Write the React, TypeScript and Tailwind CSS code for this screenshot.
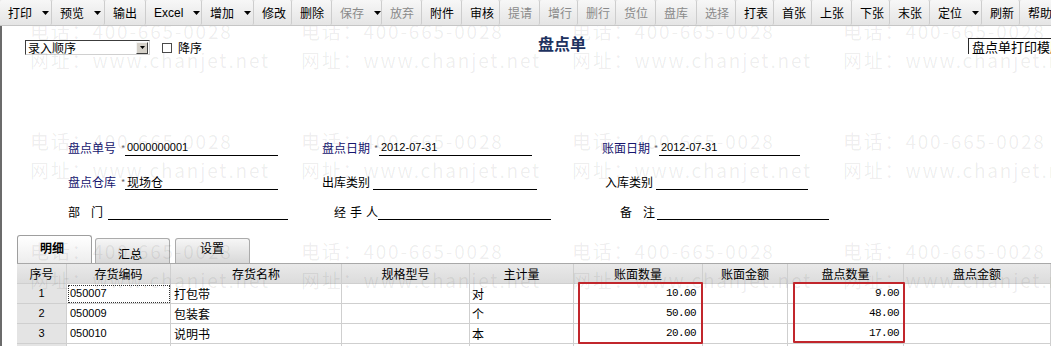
import React from "react";

type Tool = { label: string; w: string; arrow?: boolean; off?: boolean; latin?: boolean };

const tools: Tool[] = [
  { label: "打印", w: "w-[52px]", arrow: true },
  { label: "预览", w: "w-[53px]", arrow: true },
  { label: "输出", w: "w-[41px]" },
  { label: "Excel", w: "w-[56px]", arrow: true, latin: true },
  { label: "增加", w: "w-[52px]", arrow: true },
  { label: "修改", w: "w-[38px]" },
  { label: "删除", w: "w-[40px]" },
  { label: "保存", w: "w-[50px]", arrow: true, off: true },
  { label: "放弃", w: "w-[40px]", off: true },
  { label: "附件", w: "w-[40px]" },
  { label: "审核", w: "w-[38px]" },
  { label: "提请", w: "w-[40px]", off: true },
  { label: "增行", w: "w-[38px]", off: true },
  { label: "删行", w: "w-[38px]", off: true },
  { label: "货位", w: "w-[40px]", off: true },
  { label: "盘库", w: "w-[41px]", off: true },
  { label: "选择", w: "w-[39px]", off: true },
  { label: "打表", w: "w-[38px]" },
  { label: "首张", w: "w-[38px]" },
  { label: "上张", w: "w-[40px]" },
  { label: "下张", w: "w-[38px]" },
  { label: "末张", w: "w-[40px]" },
  { label: "定位", w: "w-[52px]", arrow: true },
  { label: "刷新", w: "w-[38px]" },
  { label: "帮助", w: "w-[40px]" },
];

function Arrow() {
  return (
    <svg width="7" height="4" viewBox="0 0 7 4" className="ml-[10px] shrink-0">
      <polygon points="0,0 7,0 3.5,4" fill="#000" />
    </svg>
  );
}

const cols = [
  "序号",
  "存货编码",
  "存货名称",
  "规格型号",
  "主计量",
  "账面数量",
  "账面金额",
  "盘点数量",
  "盘点金额",
];

const rows = [
  { n: "1", code: "050007", name: "打包带", unit: "对", book: "10.00", count: "9.00" },
  { n: "2", code: "050009", name: "包装套", unit: "个", book: "50.00", count: "48.00" },
  { n: "3", code: "050010", name: "说明书", unit: "本", book: "20.00", count: "17.00" },
];

const cell = "h-[20px] border-r border-b border-[#cfcfcf] leading-[19px] whitespace-nowrap overflow-hidden";
const latin = "font-['Liberation_Sans','Noto_Sans_CJK_SC',sans-serif]";
const mono = "font-['Liberation_Mono',monospace] text-[11px] tracking-[-0.6px]";

function Watermark() {
  const items = Array.from({ length: 12 });
  return (
    <div className="pointer-events-none absolute left-[28px] top-[-10px] z-20 grid grid-cols-[repeat(4,271px)] auto-rows-[110px] text-[19px] tracking-[1.8px] text-black/[0.07] font-['Noto_Sans_CJK_SC',sans-serif]">
      {items.map((_, i) => (
        <div key={i} className="flex flex-col whitespace-nowrap">
          <span className="h-[29px] leading-[29px]">电话：400-665-0028</span>
          <span className="h-[29px] leading-[29px]">网址：www.chanjet.net</span>
        </div>
      ))}
    </div>
  );
}

export default function App() {
  return (
    <div className="w-[1051px] h-[346px] overflow-hidden bg-white text-[12px] text-black font-['Noto_Sans_CJK_SC',sans-serif]">
      {/* toolbar */}
      <div className="relative z-30 flex h-[26px] border-b border-[#c6c6c6] bg-[#e4e4e4] overflow-hidden">
        {tools.map((t) => (
          <div
            key={t.label}
            className={`${t.w} shrink-0 flex items-center pl-[8px] pt-[1px] h-[25px] border-r border-[#cdcdcd] rounded-[2px] bg-linear-to-b from-[#f7f7f7] to-[#e5e5e5] leading-[14px] ${t.off ? "text-[#8a8a8a]" : "text-black"} ${t.latin ? latin : ""}`}
          >
            <span className="whitespace-nowrap">{t.label}</span>
            {t.arrow && <Arrow />}
          </div>
        ))}
      </div>

      {/* main */}
      <div className="relative h-[320px] border-l-2 border-[#6b6b6b] overflow-hidden">
        <Watermark />

        {/* top row */}
        <div className="flex h-[40px] items-start">
          <div className="w-[536px] shrink-0 flex items-center pl-[23px] pt-[14px]">
            <div className="flex h-[15px] w-[125px] items-center justify-between border border-t-[#3c3c3c] border-l-[#3c3c3c] border-r-[#d0d0d0] border-b-[#d0d0d0] bg-white">
              <span className="pl-[2px] leading-[13px] text-[12px]">录入顺序</span>
              <span className="flex h-[12px] w-[12px] items-center justify-center border border-t-[#f4f4f4] border-l-[#f4f4f4] border-r-[#404040] border-b-[#404040] bg-[#d4d0c8] mr-[1px]">
                <svg width="5" height="3" viewBox="0 0 5 3">
                  <polygon points="0,0 5,0 2.5,3" fill="#000" />
                </svg>
              </span>
            </div>
            <span className="ml-[12px] h-[10px] w-[10px] border border-[#4a4a4a] bg-white" />
            <span className="ml-[6px] leading-[14px]">降序</span>
          </div>
          <div className="mt-[9px] w-[60px] shrink-0 text-[16px] leading-[16px] font-bold text-[#1d3260]">盘点单</div>
          <div className="flex-1" />
          <div className="mt-[12px] h-[16px] w-[83px] shrink-0 overflow-hidden whitespace-nowrap border-l border-t border-[#2a2a2a] pl-[3px] text-[13px] leading-[16px]">
            盘点单打印模版
          </div>
        </div>

        {/* form row 1 */}
        <div className="mt-[70px] flex h-[20px] items-end">
          <div className="w-[66px] shrink-0" />
          <div className="flex w-[254px] shrink-0 items-end">
            <span className="w-[53px] leading-[16px] text-[#16166e]">盘点单号</span>
            <span className="w-[4px] text-[9px] leading-[14px] text-[#666]">*</span>
            <span className={`w-[153px] h-[16px] border-b border-black pl-[2px] text-[11px] leading-[15px] ${latin}`}>0000000001</span>
          </div>
          <div className="flex w-[280px] shrink-0 items-end">
            <span className="w-[52px] leading-[16px] text-[#16166e]">盘点日期</span>
            <span className="w-[5px] text-[9px] leading-[14px] text-[#666]">*</span>
            <span className={`w-[153px] h-[16px] border-b border-black pl-[2px] text-[11px] leading-[15px] ${latin}`}>2012-07-31</span>
          </div>
          <div className="flex items-end">
            <span className="w-[52px] leading-[16px] text-[#16166e]">账面日期</span>
            <span className="w-[5px] text-[9px] leading-[14px] text-[#666]">*</span>
            <span className={`w-[141px] h-[16px] border-b border-black pl-[2px] text-[11px] leading-[15px] ${latin}`}>2012-07-31</span>
          </div>
        </div>

        {/* form row 2 */}
        <div className="mt-[14px] flex h-[20px] items-end">
          <div className="w-[66px] shrink-0" />
          <div className="flex w-[254px] shrink-0 items-end">
            <span className="w-[53px] leading-[16px] text-[#16166e]">盘点仓库</span>
            <span className="w-[4px] text-[9px] leading-[14px] text-[#666]">*</span>
            <span className="w-[153px] h-[16px] border-b border-black pl-[2px] leading-[15px]">现场仓</span>
          </div>
          <div className="flex w-[280px] shrink-0 items-end">
            <span className="w-[51px] leading-[16px]">出库类别</span>
            <span className="w-[164px] h-[16px] border-b border-black" />
          </div>
          <div className="flex items-end">
            <span className="w-[54px] pl-[3px] leading-[16px]">入库类别</span>
            <span className="w-[152px] h-[16px] border-b border-black" />
          </div>
        </div>

        {/* form row 3 */}
        <div className="mt-[10px] flex h-[20px] items-end">
          <div className="w-[66px] shrink-0" />
          <div className="flex w-[254px] shrink-0 items-end">
            <span className="flex w-[40px] leading-[16px]">
              <span>部</span>
              <span className="ml-[11px]">门</span>
            </span>
            <span className="w-[180px] h-[16px] border-b border-black" />
          </div>
          <div className="flex w-[280px] shrink-0 items-end">
            <span className="flex w-[56px] pl-[12px] leading-[16px]">
              <span>经</span>
              <span className="ml-[4px]">手</span>
              <span className="ml-[4px]">人</span>
            </span>
            <span className="w-[173px] h-[16px] border-b border-black" />
          </div>
          <div className="flex items-end">
            <span className="flex w-[55px] pl-[18px] leading-[16px]">
              <span>备</span>
              <span className="ml-[11px]">注</span>
            </span>
            <span className="w-[172px] h-[16px] border-b border-black" />
          </div>
        </div>

        {/* tabs */}
        <div className="mt-[15px] flex h-[28px] items-end pl-[15px]">
          <div className="h-[28px] w-[75px] rounded-t-[3px] border border-b-0 border-[#9e9e9e] bg-linear-to-b from-white to-[#ededed] pl-[22px] pt-[5px] font-bold leading-[14px]">
            明细
          </div>
          <div className="ml-[3px] h-[25px] w-[75px] rounded-t-[3px] border border-b-0 border-[#ababab] bg-linear-to-b from-[#f6f6f6] to-[#d8d8d8] pl-[22px] pt-[8px] leading-[14px]">
            汇总
          </div>
          <div className="ml-[5px] h-[25px] w-[75px] rounded-t-[3px] border border-b-0 border-[#ababab] bg-linear-to-b from-[#f6f6f6] to-[#d8d8d8] pl-[24px] pt-[2px] leading-[14px]">
            设置
          </div>
        </div>

        {/* table */}
        <div className="relative ml-[15px]">
          <div className="grid grid-cols-[50px_104px_171px_128px_104px_129px_85px_116px_147px] border-t border-[#a8a8a8]">
            {cols.map((c) => (
              <div key={c} className={`${cell} bg-linear-to-b from-[#e9e9e9] to-[#dcdcdc] text-center`}>
                {c}
              </div>
            ))}
            {rows.map((r, i) => (
              <React.Fragment key={r.n}>
                <div className={`${cell} bg-[#e4e4e4] text-center text-[11px] ${latin}`}>{r.n}</div>
                <div className={`${cell} pl-[3px] text-[11px] ${latin} ${i === 0 ? "outline-1 outline-dotted outline-[#333] -outline-offset-2" : ""}`}>{r.code}</div>
                <div className={`${cell} pl-[3px]`}>{r.name}</div>
                <div className={cell} />
                <div className={`${cell} pl-[2px]`}>{r.unit}</div>
                <div className={`${cell} pr-[6px] text-right ${mono}`}>{r.book}</div>
                <div className={cell} />
                <div className={`${cell} pr-[4px] text-right ${mono}`}>{r.count}</div>
                <div className={cell} />
              </React.Fragment>
            ))}
            {cols.map((c, i) => (
              <div key={"e" + c} className={`${cell} ${i === 0 ? "bg-[#e4e4e4]" : ""}`} />
            ))}
          </div>
          <div className="pointer-events-none absolute left-[561px] top-[19px] z-30 h-[62px] w-[125px] rounded-[1px] border-2 border-[#c1262c]" />
          <div className="pointer-events-none absolute left-[776px] top-[19px] z-30 h-[61px] w-[112px] rounded-[1px] border-2 border-[#c1262c]" />
        </div>
      </div>
    </div>
  );
}
